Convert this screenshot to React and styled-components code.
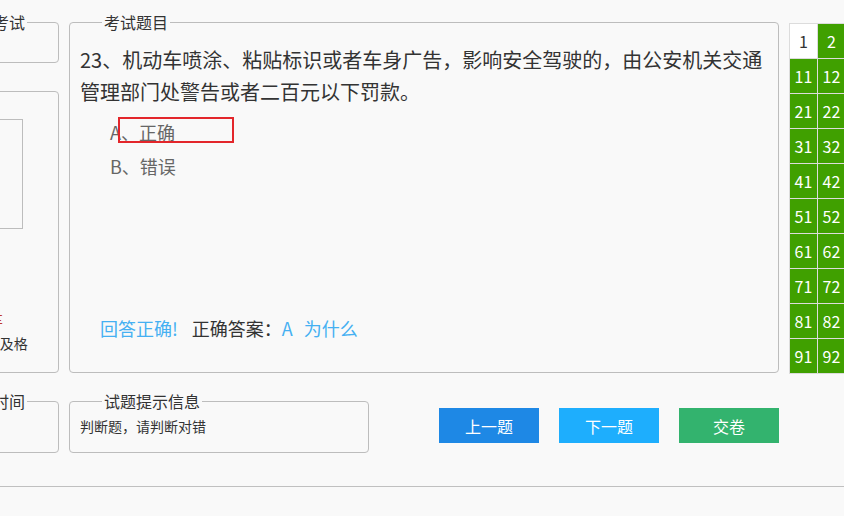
import React from 'react';
import styled, { createGlobalStyle } from 'styled-components';

const GlobalStyle = createGlobalStyle`
  html, body {
    margin: 0;
    padding: 0;
    background: #f9f9f9;
    overflow: hidden;
  }
  body {
    font-family: "Microsoft YaHei", "Noto Sans CJK SC", "Noto Sans", sans-serif;
    color: #333;
  }
`;

const Page = styled.div`
  width: 844px;
  height: 516px;
  overflow: hidden;
`;

const Main = styled.div`
  display: flex;
  align-items: flex-start;
  gap: 10px;
  padding-top: 12px;
  margin-left: -106px;
`;

const Column = styled.div`
  display: flex;
  flex-direction: column;
  gap: 18px;
  width: ${(p) => p.width}px;
  flex-shrink: 0;
`;

const Box = styled.fieldset`
  margin: 0;
  box-sizing: border-box;
  height: ${(p) => p.height}px;
  border: 1px solid #bdbdbd;
  border-radius: 4px;
  padding: ${(p) => p.pad || '0 10px'};
  min-width: 0;
`;

const Legend = styled.legend`
  margin-left: 22px;
  padding: 0 2px;
  font-size: 16px;
  line-height: 20px;
  color: #333;
`;

const Photo = styled.div`
  width: 92px;
  height: 110px;
  margin: 18px auto 0;
  border: 1px solid #bdbdbd;
  box-sizing: border-box;
`;

const InfoList = styled.div`
  margin-top: 78px;
  font-size: 14px;
  line-height: 24px;
  color: #333;
`;

const Highlight = styled.span`
  color: #c0392b;
`;

const Question = styled.div`
  font-size: 20px;
  line-height: 32px;
  color: #333;
`;

const Options = styled.div`
  margin-top: 7px;
  padding-left: 30px;
`;

const Option = styled.div`
  position: relative;
  font-size: 18px;
  line-height: 34px;
  color: #666;
`;

const Selected = styled.div`
  position: absolute;
  left: 8px;
  top: 2px;
  width: 116px;
  height: 26px;
  border: 2px solid #e3262b;
  box-sizing: border-box;
  pointer-events: none;
`;

const Result = styled.div`
  margin-top: 128px;
  padding-left: 20px;
  font-size: 18px;
  line-height: 34px;
  display: flex;
  gap: 14px;
`;

const Blue = styled.span`
  color: #45b0f2;
  margin-left: ${(p) => p.gap || 0}px;
`;

const Dark = styled.span`
  color: #333;
`;

const Hint = styled.div`
  font-size: 14px;
  line-height: 20px;
  padding-top: 5px;
  color: #333;
`;

const BottomRow = styled.div`
  display: flex;
  align-items: flex-start;
`;

const Buttons = styled.div`
  flex: 1;
  display: flex;
  justify-content: flex-end;
  gap: 20px;
  margin-top: 17px;
`;

const Button = styled.button`
  width: 100px;
  height: 35px;
  border: none;
  border-radius: 0;
  background: ${(p) => p.bg};
  color: #fff;
  font-family: inherit;
  font-size: 16px;
  cursor: pointer;
`;

const Grid = styled.div`
  margin-top: 11px;
  display: grid;
  grid-template-columns: repeat(10, 27px);
  grid-auto-rows: 34px;
  gap: 1px;
  padding: 1px;
  background: #dcdcdc;
  flex-shrink: 0;
`;

const Cell = styled.div`
  display: flex;
  align-items: center;
  justify-content: center;
  font-size: 16px;
  background: ${(p) => (p.done ? '#40a000' : '#fff')};
  color: ${(p) => (p.done ? '#fff' : '#333')};
`;

const Footer = styled.div`
  margin-top: 33px;
  border-top: 1px solid #c0c0c0;
  height: 29px;
`;

const numbers = Array.from({ length: 100 }, (_, i) => i + 1);

const App = () => (
  <Page>
    <GlobalStyle />
    <Main>
      <Column width={165}>
        <Box height={51}>
          <Legend>驾驶理论考试</Legend>
        </Box>
        <Box height={292}>
          <Legend>考生信息</Legend>
          <Photo />
          <InfoList>
            <div>车型：<Highlight>小型汽车</Highlight></div>
            <div>总分100，90分及格</div>
          </InfoList>
        </Box>
        <Box height={62}>
          <Legend>考试剩余时间</Legend>
        </Box>
      </Column>

      <Column width={710}>
        <Box height={361} pad="12px 10px 0">
          <Legend>考试题目</Legend>
          <Question>
            23、机动车喷涂、粘贴标识或者车身广告，影响安全驾驶的，由公安机关交通管理部门处警告或者二百元以下罚款。
          </Question>
          <Options>
            <Option>
              A、正确
              <Selected />
            </Option>
            <Option>B、错误</Option>
          </Options>
          <Result>
            <Blue>回答正确!</Blue>
            <span>
              <Dark>正确答案：</Dark>
              <Blue>A</Blue>
              <Blue gap={11}>为什么</Blue>
            </span>
          </Result>
        </Box>
        <BottomRow>
          <Column width={300}>
            <Box height={62}>
              <Legend>试题提示信息</Legend>
              <Hint>判断题，请判断对错</Hint>
            </Box>
          </Column>
          <Buttons>
            <Button bg="#1e88e5">上一题</Button>
            <Button bg="#1eaefd">下一题</Button>
            <Button bg="#33b36e">交卷</Button>
          </Buttons>
        </BottomRow>
      </Column>

      <Grid>
        {numbers.map((n) => (
          <Cell key={n} done={n !== 1}>
            {n}
          </Cell>
        ))}
      </Grid>
    </Main>
    <Footer />
  </Page>
);

export default App;
